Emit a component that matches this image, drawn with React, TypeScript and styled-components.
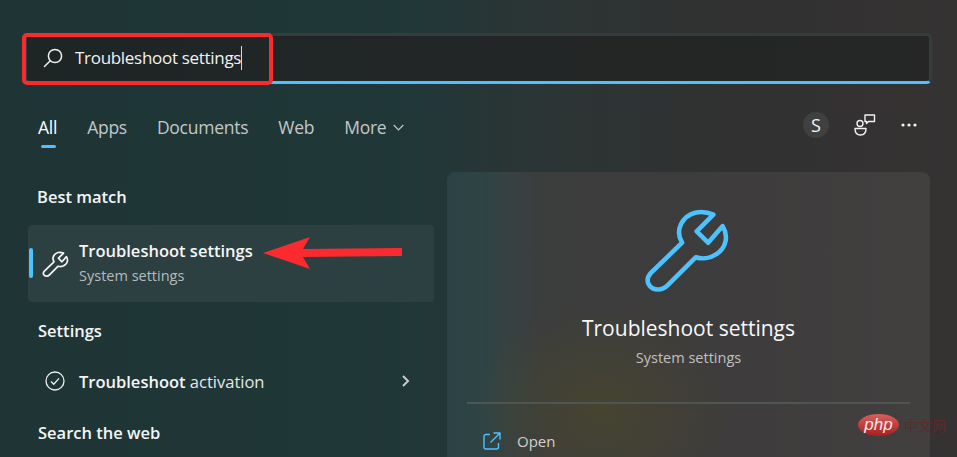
import styled, { createGlobalStyle } from 'styled-components';

const GlobalStyle = createGlobalStyle`
  html, body {
    margin: 0;
    padding: 0;
    background: #1f3536;
  }
  * {
    box-sizing: border-box;
  }
`;

const Page = styled.div`
  position: relative;
  width: 957px;
  height: 457px;
  overflow: hidden;
  font-family: 'Open Sans', 'Noto Sans', sans-serif;
  color: #fff;
  background: linear-gradient(90deg, #1e3435 0%, #203738 42%, #2b3535 55%, #313131 75%, #353232 100%);
`;

const SearchBar = styled.div`
  position: relative;
  display: flex;
  align-items: center;
  gap: 11px;
  height: 51px;
  margin: 33px 25px 0 24px;
  padding: 0 0 2px 15px;
  background: linear-gradient(90deg, #1e2525, #262626);
  border: 3px solid #333d3d;
  border-bottom: 3px solid #4cc2ff;
  border-radius: 5px;
`;

const RedBox = styled.div`
  position: absolute;
  left: -5px;
  top: -3px;
  width: 251px;
  height: 52px;
  border: 4px solid #fb2a2e;
  border-radius: 5px;
`;

const SearchText = styled.span`
  font-size: 17px;
  letter-spacing: -0.3px;
  color: #f2f2f2;
`;

const Caret = styled.span`
  width: 1px;
  height: 24px;
  margin-left: -11px;
  background: #d8d8d8;
`;

const TabRow = styled.div`
  display: flex;
  align-items: center;
  gap: 30px;
  height: 40px;
  margin-top: 23px;
  padding: 0 40px 0 38px;
`;

const Tab = styled.span<{ $active?: boolean }>`
  position: relative;
  display: flex;
  align-items: center;
  gap: 7px;
  font-size: 17.5px;
  letter-spacing: -0.26px;
  color: ${(p) => (p.$active ? '#ffffff' : '#c2c8c8')};

  ${(p) =>
    p.$active &&
    `
    &::after {
      content: '';
      position: absolute;
      left: 3px;
      top: 30px;
      width: 15px;
      height: 3px;
      border-radius: 2px;
      background: #4cc2ff;
    }
  `}
`;

const TabActions = styled.div`
  display: flex;
  align-items: center;
  gap: 25px;
  margin-left: auto;
  margin-top: -5px;
`;

const Avatar = styled.div`
  display: flex;
  align-items: center;
  justify-content: center;
  width: 26px;
  height: 26px;
  border-radius: 50%;
  background: #404040;
  font-size: 18px;
  color: #f4f4f4;
`;

const Columns = styled.div`
  display: grid;
  grid-template-columns: 406px 483px;
  gap: 13px;
  margin-top: 25px;
  padding-left: 28px;
`;

const LeftColumn = styled.div`
  display: flex;
  flex-direction: column;
`;

const SectionTitle = styled.h3<{ $top: number }>`
  margin: ${(p) => p.$top}px 0 0 ${(p) => (p.$top === 14 ? 9 : 10)}px;
  font-size: 16.5px;
  line-height: 22px;
  font-weight: 600;
  color: #f4f6f6;
`;

const BestMatch = styled.div`
  position: relative;
  display: flex;
  align-items: center;
  gap: 10px;
  height: 77px;
  margin-top: 17px;
  padding-left: 9px;
  border-radius: 4px;
  background: #2c3f41;

  &::before {
    content: '';
    position: absolute;
    left: 1px;
    top: 23px;
    width: 4px;
    height: 30px;
    border-radius: 2px;
    background: #4cc2ff;
  }
`;

const ResultText = styled.div`
  display: flex;
  flex-direction: column;
  gap: 5px;
  margin-top: -1px;
`;

const ResultTitle = styled.span`
  font-size: 16.5px;
  line-height: 20px;
  font-weight: 600;
  color: #f6f6f6;
`;

const ResultSub = styled.span`
  font-size: 14.5px;
  line-height: 20px;
  color: #b4bcbc;
`;

const Arrow = styled.svg`
  position: absolute;
  left: 234px;
  top: 11px;
`;

const ActivationRow = styled.div`
  display: flex;
  align-items: center;
  gap: 14px;
  height: 40px;
  margin-top: 19px;
  padding: 0 24px 0 17px;
`;

const ActivationText = styled.span`
  flex: 1;
  font-size: 16.5px;
  color: #e6e8e8;

  b {
    font-weight: 600;
    color: #f6f6f6;
  }
`;

const Preview = styled.div`
  display: flex;
  flex-direction: column;
  align-items: center;
  height: 300px;
  padding: 26px 20px 0;
  border-radius: 8px;
  background:
    radial-gradient(ellipse 130px 110px at 155px 240px, rgba(90, 85, 20, 0.3), transparent),
    linear-gradient(90deg, #2b4244 0%, #2e4445 7%, #384141 13%, #3c3d3d 20%, #3e3c3c 60%, #423f3f 100%);
`;

const PreviewWrench = styled.div`
  display: flex;
  margin-right: 20px;
`;

const PreviewTitle = styled.h2`
  margin: 11px 0 0;
  font-size: 21px;
  line-height: 30px;
  font-weight: 400;
  color: #f8f8f8;
`;

const PreviewSub = styled.p`
  margin: 5px 0 0;
  font-size: 14.5px;
  line-height: 20px;
  color: #c0c0c0;
`;

const Divider = styled.div`
  align-self: stretch;
  height: 2px;
  margin-top: 34px;
  background: #505554;
`;

const OpenRow = styled.div`
  display: flex;
  align-items: center;
  align-self: stretch;
  gap: 16px;
  margin-top: 27px;
  padding-left: 16px;
  font-size: 15px;
  line-height: 20px;
  color: #d0d0d0;
`;

const Watermark = styled.div`
  position: absolute;
  left: 858px;
  top: 414px;
  display: flex;
  align-items: center;
  gap: 5px;
`;

const PhpBadge = styled.span`
  display: flex;
  align-items: center;
  justify-content: center;
  width: 41px;
  height: 22px;
  border-radius: 50%;
  background: linear-gradient(180deg, #d9605c, #a81f20);
  font-family: 'Liberation Sans', sans-serif;
  font-size: 17px;
  font-style: italic;
  color: #f5e9e9;
`;

const PhpCn = styled.span`
  font-family: 'Noto Sans CJK SC', sans-serif;
  font-size: 14px;
  color: #5a2c2c;
`;

const WrenchIcon = ({ size, color, stroke }: { size: number; color: string; stroke: number }) => (
  <svg width={size} height={size} viewBox="0 0 100 100" fill="none" stroke={color} strokeWidth={stroke} strokeLinejoin="round" style={{ flexShrink: 0 }}>
    <path d="M83 16 C72 11 58 13 52 25 C49 31 50 38 53 43 L23 72 C16 80 22 88 30 88 C34 88 37 86 39 84 L66 57 C72 59 80 58 86 54 C95 48 98 37 92 27 L78 43 L67 32 Z" />
  </svg>
);

function App() {
  return (
    <>
      <GlobalStyle />
      <Page>
        <SearchBar>
          <svg width="22" height="22" viewBox="0 0 22 22" fill="none" stroke="#f0f0f0" strokeWidth="1.5" strokeLinecap="round">
            <circle cx="13" cy="9" r="6.6" />
            <path d="M8.2 13.8 L2.5 19.5" />
          </svg>
          <SearchText>Troubleshoot settings</SearchText>
          <Caret />
          <RedBox />
        </SearchBar>

        <TabRow>
          <Tab $active>All</Tab>
          <Tab>Apps</Tab>
          <Tab>Documents</Tab>
          <Tab>Web</Tab>
          <Tab>
            More
            <svg width="11" height="7" viewBox="0 0 11 7" fill="none" stroke="#c2c8c8" strokeWidth="1.2">
              <path d="M0.7 1 L5.5 5.8 L10.3 1" />
            </svg>
          </Tab>
          <TabActions>
            <Avatar>S</Avatar>
            <svg width="22" height="22" viewBox="0 0 22 22" fill="none" stroke="#f2f2f2" strokeWidth="1.4" strokeLinejoin="round">
              <circle cx="6" cy="9.5" r="3" />
              <path d="M1 14.5 H12 C12 19 10 21 6.5 21 C3 21 1 19 1 14.5 Z" />
              <path d="M11 1 H20.5 V7.5 H14.5 L12.5 9.5 V7.5 H11 Z" />
            </svg>
            <svg width="16" height="4" viewBox="0 0 16 4" fill="#f2f2f2">
              <circle cx="2" cy="2" r="1.6" />
              <circle cx="8" cy="2" r="1.6" />
              <circle cx="14" cy="2" r="1.6" />
            </svg>
          </TabActions>
        </TabRow>

        <Columns>
          <LeftColumn>
            <SectionTitle $top={14}>Best match</SectionTitle>
            <BestMatch>
              <WrenchIcon size={32} color="#f4f4f4" stroke={5.5} />
              <ResultText>
                <ResultTitle>Troubleshoot settings</ResultTitle>
                <ResultSub>System settings</ResultSub>
              </ResultText>
              <Arrow width="140" height="34" viewBox="0 0 140 34">
                <polygon points="1,17 48,1 41,13 140,12 140,20 41,21 48,33" fill="#fb2a2e" />
              </Arrow>
            </BestMatch>
            <SectionTitle $top={18}>Settings</SectionTitle>
            <ActivationRow>
              <svg width="20" height="20" viewBox="0 0 20 20" fill="none" stroke="#f0f0f0" strokeWidth="1.3" style={{ flexShrink: 0 }}>
                <circle cx="10" cy="10" r="9" />
                <path d="M6 10.5 L8.8 13.2 L14 7.4" />
              </svg>
              <ActivationText>
                <b>Troubleshoot</b> activation
              </ActivationText>
              <svg width="8" height="12" viewBox="0 0 8 12" fill="none" stroke="#c8cccc" strokeWidth="2">
                <path d="M1 1 L6 6 L1 11" />
              </svg>
            </ActivationRow>
            <SectionTitle $top={21}>Search the web</SectionTitle>
          </LeftColumn>

          <Preview>
            <PreviewWrench>
              <WrenchIcon size={104} color="#4cc2ff" stroke={4.4} />
            </PreviewWrench>
            <PreviewTitle>Troubleshoot settings</PreviewTitle>
            <PreviewSub>System settings</PreviewSub>
            <Divider />
            <OpenRow>
              <svg width="18" height="18" viewBox="0 0 18 18" fill="none" stroke="#4cc2ff" strokeWidth="1.4" strokeLinejoin="round">
                <path d="M7 2.5 H3 C1.8 2.5 1 3.3 1 4.5 V15 C1 16.2 1.8 17 3 17 H13.5 C14.7 17 15.5 16.2 15.5 15 V11" />
                <path d="M10.5 1 H17 V7.5 M17 1 L7.5 10.5" />
              </svg>
              Open
            </OpenRow>
          </Preview>
        </Columns>

        <Watermark>
          <PhpBadge>php</PhpBadge>
          <PhpCn>中文网</PhpCn>
        </Watermark>
      </Page>
    </>
  );
}

export default App;
